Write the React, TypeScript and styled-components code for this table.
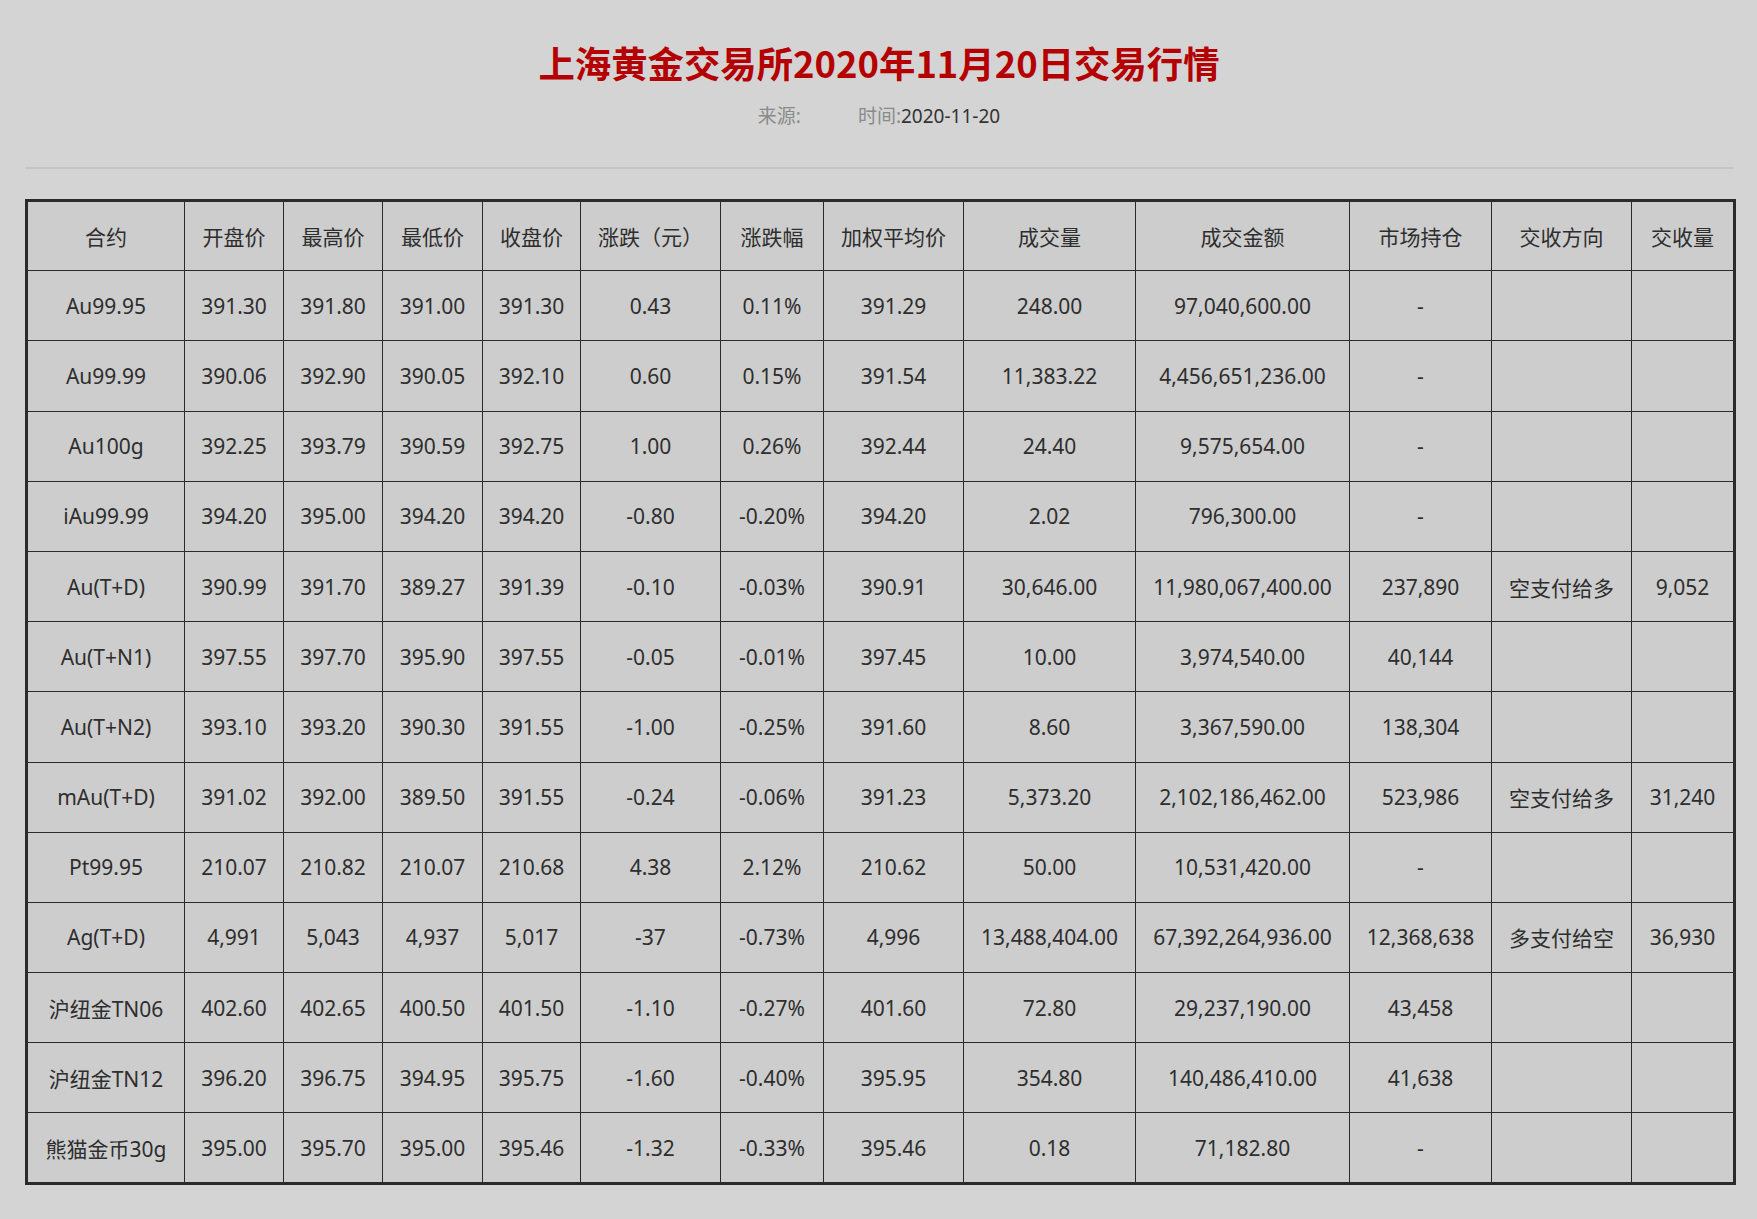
import React from "react";
import styled, { createGlobalStyle } from "styled-components";

const GlobalStyle = createGlobalStyle`
  html, body {
    margin: 0;
    padding: 0;
    background: #d4d4d4;
  }
  body {
    font-family: "Noto Sans", "Noto Sans CJK SC", sans-serif;
    color: #333;
  }
`;

const Page = styled.div`
  margin: 0 24px 0 25px;
  padding-bottom: 35px;
`;

const Header = styled.div`
  padding-top: 37px;
  text-align: center;
`;

const Title = styled.h1`
  margin: 0;
  font-family: "Noto Sans CJK SC", sans-serif;
  font-size: 36.4px;
  line-height: 50px;
  font-weight: 700;
  color: #b40000;
`;

const Meta = styled.div`
  margin-top: 17px;
  display: flex;
  justify-content: center;
  gap: 57px;
  font-family: "Noto Sans", "Noto Sans CJK SC", sans-serif;
  font-size: 19px;
  line-height: 24px;
`;

const Label = styled.span`
  color: #8a8a8a;
`;

const Value = styled.span`
  color: #333;
`;

const Rule = styled.hr`
  margin: 39px 0 0;
  border: 0;
  height: 2px;
  background: #c4c4c4;
`;

const Table = styled.table`
  margin-top: 30px;
  width: 100%;
  table-layout: fixed;
  border-collapse: collapse;
  border: 3px solid #2b2b2b;
  background: #cdcdcd;
`;

const Col = styled.col<{ $w: number }>`
  width: ${(p) => p.$w}px;
`;

const Row = styled.tr`
  height: 70.2px;
`;

const Cell = styled.td`
  border: 1px solid #2b2b2b;
  padding: 0 4px;
  text-align: center;
  vertical-align: middle;
  font-size: 21px;
  font-weight: 400;
  color: #2e2e2e;
  white-space: nowrap;
`;

const HeadCell = styled(Cell).attrs({ as: "th" })``;

const widths = [158, 99, 99, 100, 98, 140, 103, 140, 172, 214, 142, 140, 103];

const heads = [
  "合约",
  "开盘价",
  "最高价",
  "最低价",
  "收盘价",
  "涨跌（元）",
  "涨跌幅",
  "加权平均价",
  "成交量",
  "成交金额",
  "市场持仓",
  "交收方向",
  "交收量",
];

const rows: string[][] = [
  ["Au99.95", "391.30", "391.80", "391.00", "391.30", "0.43", "0.11%", "391.29", "248.00", "97,040,600.00", "-", "", ""],
  ["Au99.99", "390.06", "392.90", "390.05", "392.10", "0.60", "0.15%", "391.54", "11,383.22", "4,456,651,236.00", "-", "", ""],
  ["Au100g", "392.25", "393.79", "390.59", "392.75", "1.00", "0.26%", "392.44", "24.40", "9,575,654.00", "-", "", ""],
  ["iAu99.99", "394.20", "395.00", "394.20", "394.20", "-0.80", "-0.20%", "394.20", "2.02", "796,300.00", "-", "", ""],
  ["Au(T+D)", "390.99", "391.70", "389.27", "391.39", "-0.10", "-0.03%", "390.91", "30,646.00", "11,980,067,400.00", "237,890", "空支付给多", "9,052"],
  ["Au(T+N1)", "397.55", "397.70", "395.90", "397.55", "-0.05", "-0.01%", "397.45", "10.00", "3,974,540.00", "40,144", "", ""],
  ["Au(T+N2)", "393.10", "393.20", "390.30", "391.55", "-1.00", "-0.25%", "391.60", "8.60", "3,367,590.00", "138,304", "", ""],
  ["mAu(T+D)", "391.02", "392.00", "389.50", "391.55", "-0.24", "-0.06%", "391.23", "5,373.20", "2,102,186,462.00", "523,986", "空支付给多", "31,240"],
  ["Pt99.95", "210.07", "210.82", "210.07", "210.68", "4.38", "2.12%", "210.62", "50.00", "10,531,420.00", "-", "", ""],
  ["Ag(T+D)", "4,991", "5,043", "4,937", "5,017", "-37", "-0.73%", "4,996", "13,488,404.00", "67,392,264,936.00", "12,368,638", "多支付给空", "36,930"],
  ["沪纽金TN06", "402.60", "402.65", "400.50", "401.50", "-1.10", "-0.27%", "401.60", "72.80", "29,237,190.00", "43,458", "", ""],
  ["沪纽金TN12", "396.20", "396.75", "394.95", "395.75", "-1.60", "-0.40%", "395.95", "354.80", "140,486,410.00", "41,638", "", ""],
  ["熊猫金币30g", "395.00", "395.70", "395.00", "395.46", "-1.32", "-0.33%", "395.46", "0.18", "71,182.80", "-", "", ""],
];

const App = () => {
  return (
    <Page>
      <GlobalStyle />
      <Header>
        <Title>上海黄金交易所2020年11月20日交易行情</Title>
        <Meta>
          <Label>来源:</Label>
          <span>
            <Label>时间:</Label>
            <Value>2020-11-20</Value>
          </span>
        </Meta>
      </Header>
      <Rule />
      <Table>
        <colgroup>
          {widths.map((w, i) => (
            <Col key={i} $w={w} />
          ))}
        </colgroup>
        <thead>
          <Row>
            {heads.map((h) => (
              <HeadCell key={h}>{h}</HeadCell>
            ))}
          </Row>
        </thead>
        <tbody>
          {rows.map((r) => (
            <Row key={r[0]}>
              {r.map((v, i) => (
                <Cell key={i}>{v}</Cell>
              ))}
            </Row>
          ))}
        </tbody>
      </Table>
    </Page>
  );
};

export default App;
